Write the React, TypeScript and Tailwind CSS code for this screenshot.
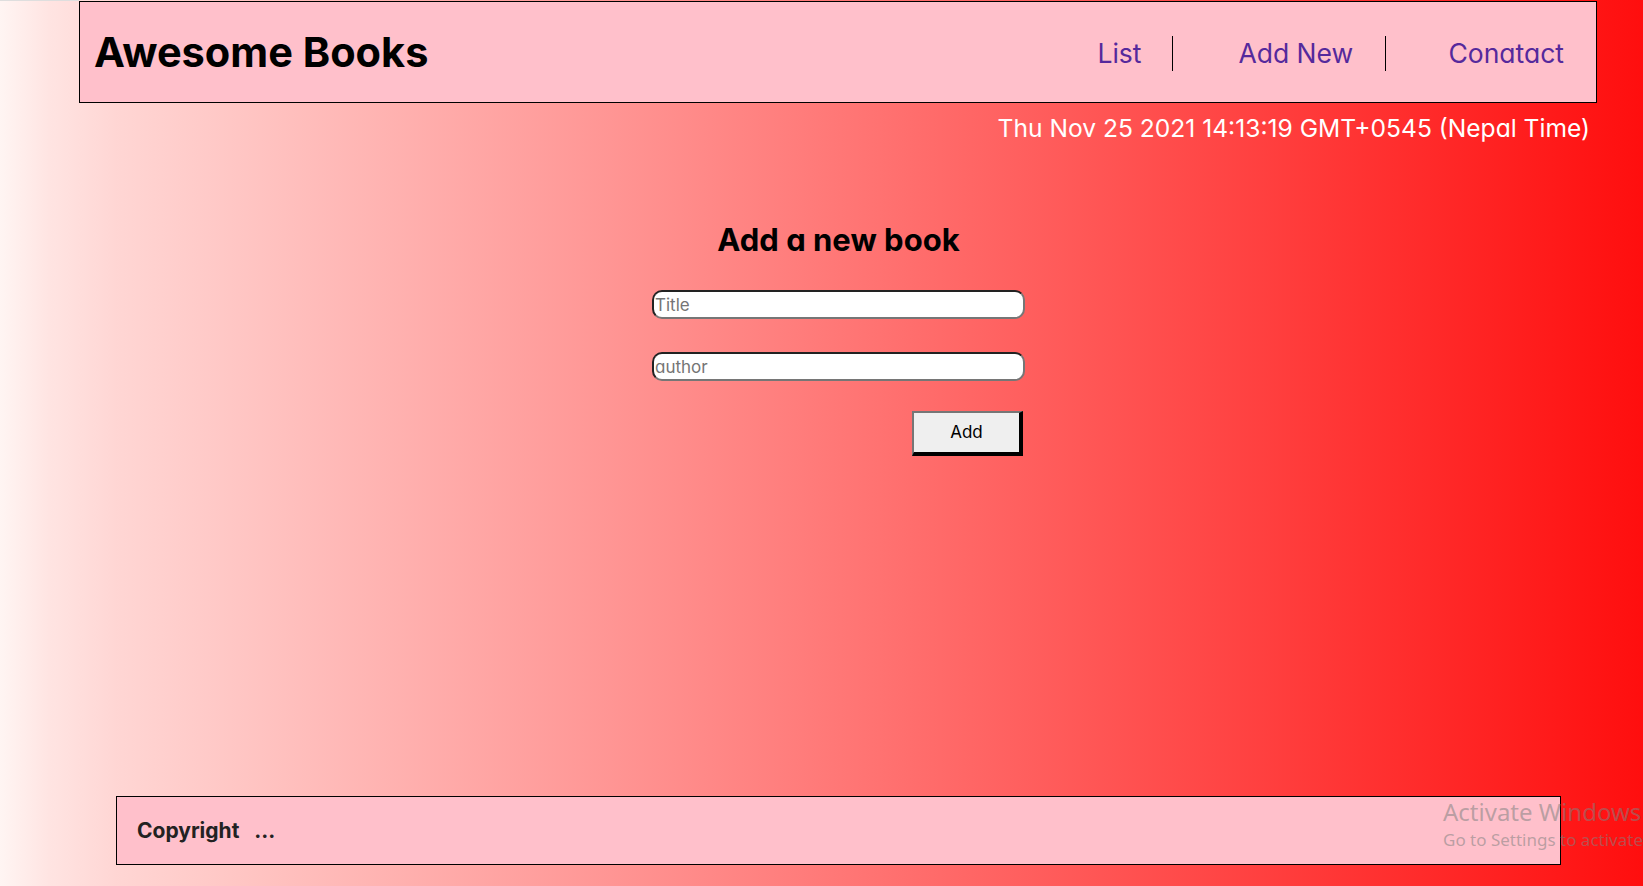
import React from "react";

const navLinks = [
  { label: "List", cls: "w-[76px] border-r" },
  { label: "Add New", cls: "w-[213px] pl-[65px] border-r" },
  { label: "Conatact", cls: "pl-[62px]" },
];

export default function App() {
  return (
    <div className="relative flex h-[886px] w-full flex-col overflow-hidden bg-[linear-gradient(to_right,#fff5f3_0%,#ffe4e2_3%,#ffd6d4_7%,#ff0e0e_100%)] font-['Inter','Noto_Sans',sans-serif] [font-feature-settings:'cv11']">
      <div className="h-px w-[79px] bg-[#dedede]" />

      {/* Header */}
      <header className="ml-[79px] flex h-[102px] w-[1518px] items-center border border-black bg-[#ffc0cb] pl-[14px]">
        <h1 className="pt-[2px] text-[41.5px] leading-none font-bold text-black">
          Awesome Books
        </h1>
        <nav className="ml-auto mr-[32px] pt-[2px]">
          <ul className="flex items-center">
            {navLinks.map((link) => (
              <li
                key={link.label}
                className={`flex h-[35px] items-center border-black ${link.cls}`}
              >
                <a href="#" className="text-[26.5px] leading-none text-[#55299c]">
                  {link.label}
                </a>
              </li>
            ))}
          </ul>
        </nav>
      </header>

      <p className="mt-[10px] pr-[53px] text-right text-[24.6px] leading-[30px] text-white">
        Thu Nov 25 2021 14:13:19 GMT+0545 (Nepal Time)
      </p>

      {/* Add book form */}
      <main className="ml-[116px] flex w-[1445px] flex-col items-center">
        <h2 className="mt-[77px] text-[31px] leading-[39px] font-bold text-black">
          Add a new book
        </h2>
        <form className="mt-[31px] flex w-[373px] flex-col" onSubmit={(e) => e.preventDefault()}>
          <input
            type="text"
            placeholder="Title"
            className="h-[29px] w-full rounded-[10px] border-2 border-t-[#222] border-r-[#767676] border-b-[#767676] border-l-[#222] bg-white px-px text-[17px] text-black placeholder:text-[#757575]"
          />
          <input
            type="text"
            placeholder="author"
            className="mt-[33px] h-[29px] w-full rounded-[10px] border-2 border-t-[#222] border-r-[#767676] border-b-[#767676] border-l-[#222] bg-white px-px text-[17px] text-black placeholder:text-[#757575]"
          />
          <button
            type="submit"
            className="mt-[30px] mr-[2px] h-[45px] w-[111px] self-end border-t-2 border-r-4 border-b-4 border-l-2 border-t-[#767676] border-r-black border-b-black border-l-[#767676] bg-[#efefef] text-[17px] text-black"
          >
            Add
          </button>
        </form>
      </main>

      {/* Footer */}
      <footer className="mt-auto mb-[21px] ml-[116px] flex h-[69px] w-[1445px] items-center border border-black bg-[#ffc0cb] px-5">
        <p className="text-[21px] font-bold text-[#222]">
          Copyright <span className="ml-2.5">...</span>
        </p>
      </footer>

      {/* Windows activation watermark */}
      <div className="pointer-events-none absolute top-[796px] left-[1443px] font-['Noto_Sans',sans-serif] whitespace-nowrap text-[rgba(128,128,128,0.55)]">
        <div className="text-[24px] leading-[32px]">Activate Windows</div>
        <div className="text-[17px] leading-[24px]">Go to Settings to activate Windows.</div>
      </div>
    </div>
  );
}
